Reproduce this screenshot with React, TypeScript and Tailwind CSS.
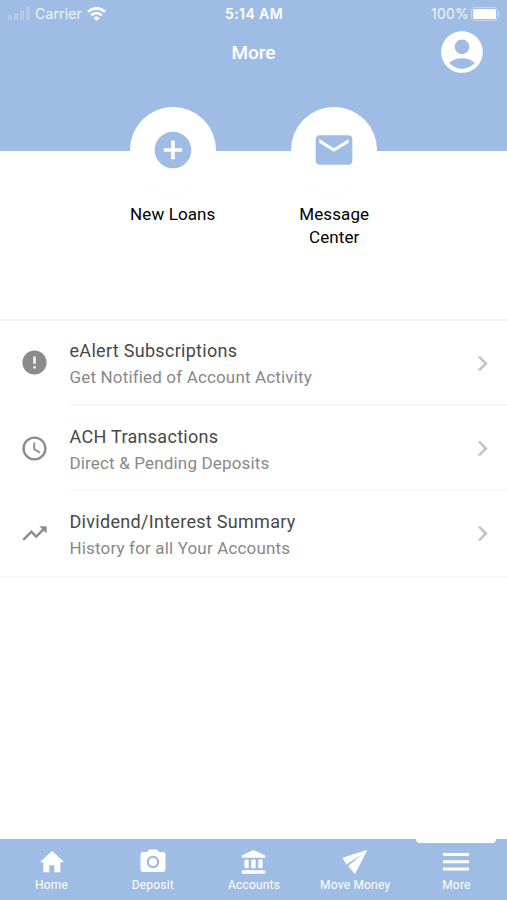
import type { ReactNode } from 'react';
import {
  MdAccountCircle,
  MdAccessTime,
  MdAddCircle,
  MdCameraAlt,
  MdChevronRight,
  MdEmail,
  MdError,
  MdTrendingUp,
} from 'react-icons/md';

const shortcuts = [
  { label: 'New Loans', icon: <MdAddCircle size={44} /> },
  { label: 'Message Center', icon: <MdEmail size={44} /> },
];

const rows = [
  { title: 'eAlert Subscriptions', text: 'Get Notified of Account Activity', icon: <MdError size={29} /> },
  { title: 'ACH Transactions', text: 'Direct & Pending Deposits', icon: <MdAccessTime size={29} /> },
  { title: 'Dividend/Interest Summary', text: 'History for all Your Accounts', icon: <MdTrendingUp size={29} /> },
];

function HomeIcon() {
  return (
    <svg width="24" height="22" viewBox="0 0 24 22" fill="currentColor">
      <path d="M12 .3 .7 10.300c-.4.500-.1 1 .4 1H3.300v8.400c0 1 .6 1.600 1.500 1.600h4.500v-7h5v7h4.500c1 0 1.600-.6 1.600-1.600v-8.400h2.500c.5 0 .8-.5.4-1L12.700.4a.9.9 0 0 0-.7-.1z" />
    </svg>
  );
}

function BankIcon() {
  return (
    <svg width="25" height="26" viewBox="0 0 26 26" fill="currentColor">
      <path d="M13 .5 1.300 6c-.4.200-.5.5-.5.9v1c0 .5.300.8.8.8h22.800c.5 0 .8-.3.8-.8v-1c0-.4-.1-.7-.5-.9z" />
      <rect x="3.500" y="10.500" width="4.500" height="9" rx="1.300" />
      <rect x="10.750" y="10.500" width="4.500" height="9" rx="1.300" />
      <rect x="18" y="10.500" width="4.500" height="9" rx="1.300" />
      <rect x=".8" y="21.500" width="24.400" height="3.700" rx="1.300" />
    </svg>
  );
}

function SendIcon() {
  return (
    <svg width="26" height="26" viewBox="0 0 26 26" fill="currentColor">
      <path d="M25.500.8 1.200 8.600a.6.6 0 0 0-.3.9l3.400 6L20.500 5 6.300 17l6 7.400c.3.4.9.3 1.100-.1z" />
    </svg>
  );
}

function MenuIcon() {
  return (
    <svg width="26" height="20" viewBox="0 0 26 20" fill="currentColor">
      <path d="M0 1h26v3H0zM0 8.300h26v3H0zM0 15.600h26v3H0z" />
    </svg>
  );
}

const tabs: { label: string; icon: ReactNode }[] = [
  { label: 'Home', icon: <HomeIcon /> },
  { label: 'Deposit', icon: <MdCameraAlt size={30} /> },
  { label: 'Accounts', icon: <BankIcon /> },
  { label: 'Move Money', icon: <SendIcon /> },
  { label: 'More', icon: <MenuIcon /> },
];

function StatusBar() {
  return (
    <div className="grid h-[27px] grid-cols-3 items-center pr-[7px] pl-2 font-['Inter',sans-serif] text-[14px] leading-5 text-white/85">
      <div className="flex items-center">
        <svg width="22" height="13" viewBox="0 0 22 13" fill="currentColor" opacity=".25">
          <rect x="0" y="8" width="4" height="5" rx="1" />
          <rect x="6" y="6" width="4" height="7" rx="1" />
          <rect x="12" y="3" width="4" height="10" rx="1" />
          <rect x="18" y="0" width="4" height="13" rx="1" />
        </svg>
        <span className="ml-[5px] tracking-[0.15px]">Carrier</span>
        <svg className="ml-[5px]" width="19" height="14" viewBox="0 0 19 14" fill="none" stroke="#fff" strokeWidth="2.800">
          <path d="M1 4.800a12.200 12.200 0 0 1 17 0M4.200 8.300a7.600 7.600 0 0 1 10.600 0" />
          <path d="M9.500 14 6.400 10.900a4.400 4.400 0 0 1 6.200 0z" fill="#fff" stroke="none" />
        </svg>
      </div>
      <div className="text-center font-semibold tracking-[0.4px] text-white">5:14 AM</div>
      <div className="flex items-center justify-end">
        <span className="tracking-[0.2px]">100%</span>
        <svg className="ml-[2px]" width="29" height="14" viewBox="0 0 29 14" fill="none">
          <rect x=".5" y=".5" width="26" height="13" rx="3" stroke="#fff" strokeOpacity=".4" />
          <rect x="2" y="2" width="23" height="10" rx="1.500" fill="#fff" />
          <path d="M27.500 5c1.500.6 1.500 3.400 0 4z" fill="#fff" fillOpacity=".4" />
        </svg>
      </div>
    </div>
  );
}

export default function App() {
  return (
    <div className="flex h-[900px] w-[507px] flex-col overflow-hidden bg-white font-['Roboto',sans-serif]">
      <header className="h-[151px] shrink-0 bg-[#9fbde4]">
        <StatusBar />
        <div className="grid h-[50px] grid-cols-3 items-center pr-5 text-white">
          <h1 className="col-start-2 pt-[2px] pl-5 text-center text-[19px] font-medium">More</h1>
          <MdAccountCircle size={50} className="justify-self-end" />
        </div>
      </header>

      <section className="relative -mt-11 flex h-[212px] shrink-0 justify-center gap-[75.500px]">
        {shortcuts.map(s => (
          <div key={s.label} className="flex w-[86px] flex-col items-center">
            <div className="flex size-[86px] shrink-0 items-center justify-center rounded-full bg-white text-[#9fbde4] shadow-[0_2px_3px_rgba(0,0,0,0.01)]">
              {s.icon}
            </div>
            <p className="mt-[10px] text-center text-[17px] leading-[23px] tracking-[0.1px] text-black">{s.label}</p>
          </div>
        ))}
      </section>

      <ul className="border-y-2 border-[#f7f7f7]">
        {rows.map((r, i) => (
          <li key={r.title} className="flex h-[85.500px] items-stretch first:-mt-px last:h-[84.500px]">
            <div className="flex w-[69.500px] items-center pl-5 text-[#8b8b8b]">{r.icon}</div>
            <div className={`flex flex-1 items-center justify-between border-b-2 pt-[3px] pr-[9px] ${i < rows.length - 1 ? 'border-[#f8f8f8]' : 'border-transparent'}`}>
              <div className="pt-[2px]">
                <div className="text-[18px] leading-[26px] tracking-[0.3px] text-[#484848]">{r.title}</div>
                <div className="text-[17px] leading-[26px] tracking-[0.160px] text-[#888]">{r.text}</div>
              </div>
              <MdChevronRight size={31} className="text-[#c4c4c4]" />
            </div>
          </li>
        ))}
      </ul>

      <nav className="mt-auto grid h-[61px] grid-cols-5 bg-[#9fbde4] pl-px text-white">
        {tabs.map(t => (
          <div key={t.label} className="relative flex flex-col items-center">
            {t.label === 'More' && <span className="absolute top-0 h-1 w-[80px] rounded-b bg-white" />}
            <div className="flex h-[45px] items-center justify-center">{t.icon}</div>
            <span className="-mt-[7px] text-[12px] leading-4 tracking-[0.2px]">{t.label}</span>
          </div>
        ))}
      </nav>
    </div>
  );
}
